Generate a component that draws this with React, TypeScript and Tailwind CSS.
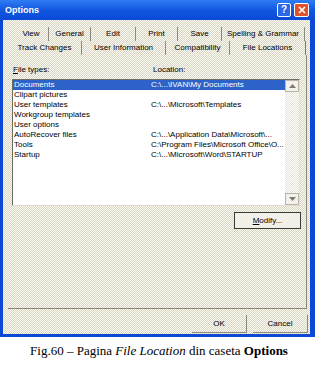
const dither = 'bg-[repeating-conic-gradient(#fbfaf5_0%_25%,#d9d5c3_0%_50%)] bg-[length:2px_2px]';

const rowOne = [
    { label: 'View', w: 'w-[35px]' },
    { label: 'General', w: 'w-[42px]' },
    { label: 'Edit', w: 'w-[45px]' },
    { label: 'Print', w: 'w-[42px]' },
    { label: 'Save', w: 'w-[44px]' },
    { label: 'Spelling & Grammar', w: 'w-[83px]' },
];

const rowTwo = [
    { label: 'Track Changes', w: 'w-[74px]', active: false },
    { label: 'User Information', w: 'w-[84px]', active: false },
    { label: 'Compatibility', w: 'w-[64px]', active: false },
    { label: 'File Locations', w: 'w-[76px]', active: true },
];

const fileTypes = [
    ['Documents', 'C:\\...\\IVAN\\My Documents'],
    ['Clipart pictures', ''],
    ['User templates', 'C:\\...\\Microsoft\\Templates'],
    ['Workgroup templates', ''],
    ['User options', ''],
    ['AutoRecover files', 'C:\\...\\Application Data\\Microsoft\\...'],
    ['Tools', 'C:\\Program Files\\Microsoft Office\\O...'],
    ['Startup', 'C:\\...\\Microsoft\\Word\\STARTUP'],
];

function ScrollArrow({ up }: { up: boolean }) {
    return (
        <div className="flex h-[12px] w-full items-center justify-center border border-[#b9b6a8] bg-[#f3f1ea]">
            <svg width="7" height="4" viewBox="0 0 7 4">
                <polygon points={up ? '0,4 3.5,0 7,4' : '0,0 3.5,4 7,0'} fill="#7d7b72" />
            </svg>
        </div>
    );
}

export default function App() {
    return (
        <div className="h-[366px] w-[318px] bg-white font-['Liberation_Sans',Arial,sans-serif] text-[8px] leading-[10px] text-black">
            <div className="flex h-[337px] w-[315px] flex-col">
                {/* title bar */}
                <div className="flex h-[20px] items-center bg-gradient-to-b from-[#2f7cf4] via-[#1257e0] to-[#0a4ad6] pl-[5px] pr-[6px]">
                    <span className="text-[9px] font-bold text-white">Options</span>
                    <div className="ml-auto flex gap-[3px]">
                        <div className="flex h-[14px] w-[14px] items-center justify-center rounded-[2px] border border-white bg-[#2a68e8] text-[10px] font-bold text-white">
                            ?
                        </div>
                        <div className="flex h-[14px] w-[15px] items-center justify-center rounded-[2px] border border-white bg-[#e0512b]">
                            <svg width="8" height="8" viewBox="0 0 8 8">
                                <path d="M1 1 L7 7 M7 1 L1 7" stroke="white" strokeWidth="1.6" />
                            </svg>
                        </div>
                    </div>
                </div>

                {/* body */}
                <div className={`flex flex-1 flex-col border-b-[3px] border-l-[3px] border-r-[5px] border-[#0b48d6] pt-[7px] ${dither}`}>
                    {/* tabs */}
                    <div className="ml-[11px] flex h-[14px]">
                        {rowOne.map((t) => (
                            <div key={t.label} className={`${t.w} flex items-center justify-center border-r border-[#8e8c82] whitespace-nowrap`}>
                                {t.label}
                            </div>
                        ))}
                    </div>
                    <div className="ml-[5px] flex h-[14px]">
                        {rowTwo.map((t) => (
                            <div
                                key={t.label}
                                className={`${t.w} flex items-center justify-center whitespace-nowrap ${t.active ? 'border-r border-[#7b7970]' : 'border-r border-[#8e8c82]'}`}
                            >
                                {t.label}
                            </div>
                        ))}
                    </div>

                    {/* panel */}
                    <div className="ml-[5px] flex h-[254px] w-[299px] flex-col border-b border-r border-[#8d8a7d] pl-[4px] pr-[5px]">
                        <div className="mt-[10px] flex h-[10px]">
                            <span className="w-[140px] pl-[1px]">
                                <span className="underline">F</span>ile types:
                            </span>
                            <span className="pl-[1px]">Location:</span>
                        </div>
                        <div className="mt-[4px] flex h-[127px] w-[288px] border-b border-l border-r border-t border-b-[#e2dfd3] border-l-[#6f6c62] border-r-[#e2dfd3] border-t-[#6f6c62] bg-white">
                            <div className="flex flex-1 flex-col">
                                {fileTypes.map(([name, loc], i) => (
                                    <div key={name} className={`flex h-[10px] items-center whitespace-nowrap ${i === 0 ? 'bg-[#2d62c8] text-white' : ''}`}>
                                        <span className="w-[138px] pl-[1px]">{name}</span>
                                        <span>{loc}</span>
                                    </div>
                                ))}
                            </div>
                            <div className="flex w-[14px] flex-col bg-[repeating-conic-gradient(#ffffff_0%_25%,#e6e3d8_0%_50%)] bg-[length:2px_2px]">
                                <ScrollArrow up />
                                <div className="flex-1" />
                                <ScrollArrow up={false} />
                            </div>
                        </div>
                        <div className="mt-[6px] flex justify-end">
                            <div className="flex h-[17px] w-[67px] items-center justify-center border border-[#3b3a36] bg-[#f2f0e8]">
                                <span>
                                    <span className="underline">M</span>odify...
                                </span>
                            </div>
                        </div>
                    </div>

                    {/* buttons */}
                    <div className="mt-[6px] flex justify-end gap-[6px] pr-[2px]">
                        <div className="flex h-[18px] w-[55px] items-center justify-center border-b border-r border-[#8a887e]">OK</div>
                        <div className="flex h-[18px] w-[55px] items-center justify-center border-b border-r border-[#8a887e]">Cancel</div>
                    </div>
                </div>
            </div>

            <p className="mt-[6px] text-center font-['Liberation_Serif','Times_New_Roman',serif] text-[13px] leading-[15px]">
                Fig.60 – Pagina <i>File Location</i> din caseta <b>Options</b>
            </p>
        </div>
    );
}
